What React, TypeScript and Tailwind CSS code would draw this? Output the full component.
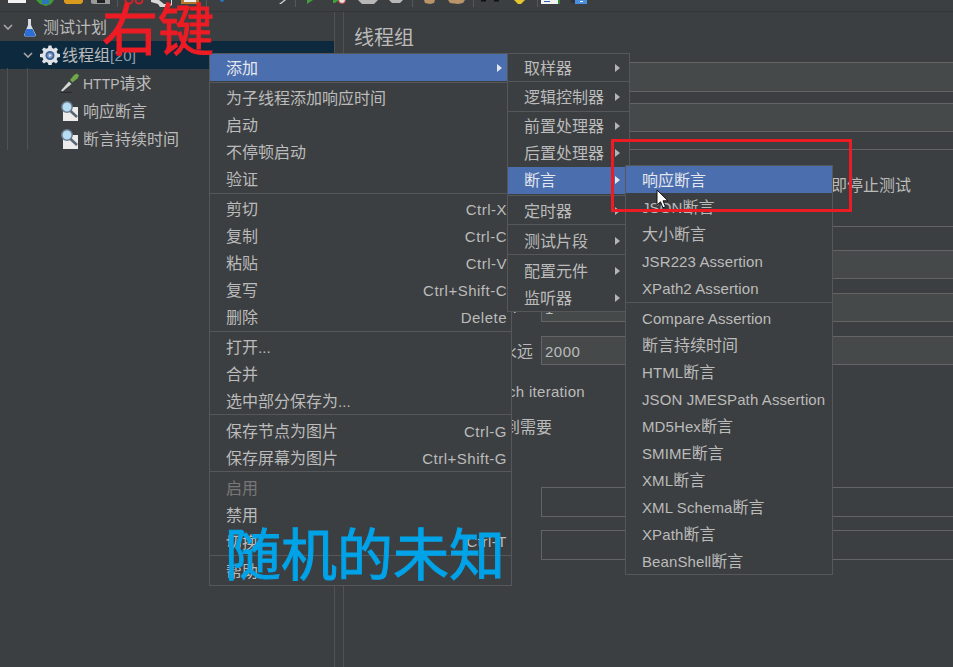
const fontStack = "font-['Liberation_Sans','Noto_Sans_CJK_SC',sans-serif]";

type MenuItem = {
    label?: string;
    shortcut?: string;
    arrow?: boolean;
    active?: boolean;
    disabled?: boolean;
    sep?: string;
};

const mainItems: MenuItem[] = [
    { label: '添加', arrow: true, active: true },
    { sep: 'mt-[1px] h-[3px]' },
    { label: '为子线程添加响应时间' },
    { label: '启动' },
    { label: '不停顿启动' },
    { label: '验证' },
    { sep: 'h-[3px]' },
    { label: '剪切', shortcut: 'Ctrl-X' },
    { label: '复制', shortcut: 'Ctrl-C' },
    { label: '粘贴', shortcut: 'Ctrl-V' },
    { label: '复写', shortcut: 'Ctrl+Shift-C' },
    { label: '删除', shortcut: 'Delete' },
    { sep: 'h-[3px]' },
    { label: '打开...' },
    { label: '合并' },
    { label: '选中部分保存为...' },
    { sep: 'h-[3px]' },
    { label: '保存节点为图片', shortcut: 'Ctrl-G' },
    { label: '保存屏幕为图片', shortcut: 'Ctrl+Shift-G' },
    { sep: 'h-[3px]' },
    { label: '启用', disabled: true },
    { label: '禁用' },
    { label: '切换', shortcut: 'Ctrl-T' },
    { sep: 'h-[3px]' },
    { label: '帮助' },
];

const addItems: MenuItem[] = [
    { label: '取样器', arrow: true },
    { sep: 'h-[3px]' },
    { label: '逻辑控制器', arrow: true },
    { sep: 'h-[2px]' },
    { label: '前置处理器', arrow: true },
    { label: '后置处理器', arrow: true },
    { label: '断言', arrow: true, active: true },
    { sep: 'mt-[1px] h-[3px]' },
    { label: '定时器', arrow: true },
    { sep: 'h-[3px]' },
    { label: '测试片段', arrow: true },
    { sep: 'h-[3px]' },
    { label: '配置元件', arrow: true },
    { label: '监听器', arrow: true },
];

const assertionItems: MenuItem[] = [
    { label: '响应断言', active: true },
    { label: 'JSON断言' },
    { label: '大小断言' },
    { label: 'JSR223 Assertion' },
    { label: 'XPath2 Assertion' },
    { sep: 'mt-[1px] h-[2px]' },
    { label: 'Compare Assertion' },
    { label: '断言持续时间' },
    { label: 'HTML断言' },
    { label: 'JSON JMESPath Assertion' },
    { label: 'MD5Hex断言' },
    { label: 'SMIME断言' },
    { label: 'XML断言' },
    { label: 'XML Schema断言' },
    { label: 'XPath断言' },
    { label: 'BeanShell断言' },
];

// latin runs are a bit smaller than the CJK ones in the Swing font
const Mixed = ({ text }: { text: string }) => (
    <>
        {text.split(/([\u4e00-\u9fff]+)/).filter(Boolean).map((part, i) =>
            /[\u4e00-\u9fff]/.test(part) ? (
                <span key={i}>{part}</span>
            ) : (
                <span key={i} className="text-[15px] tracking-[0.1px]">{part}</span>
            )
        )}
    </>
);

const MenuRows = ({ items }: { items: MenuItem[] }) => (
    <>
        {items.map((item, i) => {
            if (item.sep) return <div key={i} className={`${item.sep} border-t border-[#555759]`} />;
            return (
                <div
                    key={i}
                    className={`flex h-[27px] shrink-0 items-center justify-between whitespace-nowrap pl-[16px] ${item.active ? 'bg-[#4b6eaf] text-[#e4e7ee]' : ''} ${item.disabled ? 'text-[#777777]' : ''}`}
                >
                    <span className="pt-[2px]"><Mixed text={item.label ?? ''} /></span>
                    {item.shortcut && <span className="pr-[4px] pt-[2px] text-[15px] tracking-[0.5px]">{item.shortcut}</span>}
                    {item.arrow && (
                        <span className={`mr-[9px] h-0 w-0 border-y-[4px] border-l-[5px] border-y-transparent ${item.active ? 'border-l-[#e4e7ee]' : 'border-l-[#b4b4b4]'}`} />
                    )}
                </div>
            );
        })}
    </>
);

const ToolbarIcons = () => (
    <svg width="600" height="11" viewBox="0 0 600 11" className="absolute left-0 top-0">
        <rect x="8" y="0" width="18" height="3" fill="#f2f2f2" />
        <path d="M36 0h18l-3 4-5 2-6-2z" fill="#3f9a3a" />
        <rect x="42" y="0" width="7" height="4" fill="#2f74c0" />
        <path d="M64 0h19v2l-2 2H66l-2-2z" fill="#d99a1e" />
        <path d="M91 0h19v4H93l-2-1z" fill="#9a9a9a" />
        <rect x="97" y="0" width="8" height="3" fill="#222" />
        <rect x="117" y="0" width="1" height="7" fill="#55585a" />
        <circle cx="129" cy="0" r="3.5" fill="none" stroke="#d3232a" strokeWidth="2" />
        <circle cx="139" cy="0" r="3.5" fill="none" stroke="#d3232a" strokeWidth="2" />
        <path d="M151 0h8l5 4h7V0h1v5l-4 2h-8l-2-3-7-2z" fill="#d8d8d8" />
        <rect x="181" y="0" width="18" height="4" fill="#b4782a" />
        <rect x="184" y="0" width="12" height="2" fill="#eeeeee" />
        <rect x="206" y="0" width="1" height="7" fill="#55585a" />
        <circle cx="222" cy="0" r="2" fill="#2f74c0" />
        <path d="M279 4l5-4h2l-5 4z" fill="#d8d8d8" />
        <rect x="295" y="0" width="1" height="7" fill="#55585a" />
        <path d="M307 0h6l-6 4z" fill="#3fa03a" />
        <path d="M333 0h6l-4 3h-2z" fill="#3fa03a" />
        <circle cx="342" cy="0" r="3.5" fill="#e2e2e2" stroke="#c9342f" />
        <path d="M358 0h20l-4 4h-12z" fill="#b8b8b8" />
        <path d="M389 0h14l-3 3h-8z" fill="#b8b8b8" />
        <rect x="412" y="0" width="1" height="7" fill="#55585a" />
        <path d="M424 0h11l-1 3-4 1-5-1z" fill="#b89468" />
        <path d="M448 0h17l-2 3-5 1-8-1z" fill="#b89468" />
        <rect x="473" y="0" width="1" height="7" fill="#55585a" />
        <rect x="481" y="0" width="5" height="1.5" fill="#111" />
        <rect x="494" y="0" width="5" height="1.5" fill="#111" />
        <path d="M514 0h11l-4 4h-3z" fill="#e3c52c" />
        <rect x="537" y="0" width="1" height="7" fill="#55585a" />
        <rect x="541" y="0" width="18" height="4" fill="#f2f2f2" />
        <rect x="544" y="1" width="6" height="1" fill="#2f5fa8" />
        <rect x="558" y="0" width="2" height="4" fill="#2f8a3a" />
        <rect x="571" y="0" width="4" height="3" fill="#333" />
        <rect x="575" y="0" width="12" height="4" fill="#4a90e2" />
        <rect x="580" y="1" width="3" height="1" fill="#fff" />
    </svg>
);

const Chevron = () => (
    <svg width="10" height="6" viewBox="0 0 10 6" className="shrink-0">
        <path d="M1 1l4 4 4-4" fill="none" stroke="#a8a8a8" strokeWidth="1.6" />
    </svg>
);

const FlaskIcon = () => (
    <svg width="14" height="19" viewBox="0 0 14 19" className="shrink-0">
        <path d="M5 1h3v6l5 10-1 1.500H2L1 17 5 7z" fill="#d6dde4" />
        <path d="M3.500 11h6l3 6-1 1.500H2L1.500 16z" fill="#2b6fd6" />
    </svg>
);

const GearIcon = () => (
    <svg width="20" height="20" viewBox="0 0 20 20" className="shrink-0">
        <path
            d="M8.500 0.500h3l.5 2.500 1.800.8L16 2.400 18 4.500l-1.400 2.200.8 1.800 2.600.5v3l-2.600.5-.8 1.800 1.400 2.200-2 2-2.200-1.400-1.800.8-.5 2.600h-3l-.5-2.600-1.800-.8L4 18.500l-2-2 1.400-2.200-.8-1.800L0 12v-3l2.600-.5.800-1.800L2 4.500l2-2.100 2.200 1.400L8 3z"
            fill="#dfe2e6"
        />
        <circle cx="10" cy="10.500" r="4.500" fill="#3a5f96" />
        <circle cx="10" cy="10.500" r="2.800" fill="#7f9cc4" />
        <path d="M9 9l2.500 1.500L9 12z" fill="#e6edf6" />
    </svg>
);

const DropperIcon = () => (
    <svg width="20" height="20" viewBox="0 0 20 20" className="shrink-0">
        <path d="M1 17.500l8-9 2.500 2.500-9 7.500z" fill="#d4d8d4" />
        <path d="M10 7l4-5 3-1.500 2 2-1.500 3-5 4z" fill="#6fa64a" />
        <path d="M1 19.500h11" stroke="#2a2a2a" strokeWidth="1.200" />
    </svg>
);

const MagnifierIcon = () => (
    <svg width="20" height="20" viewBox="0 0 20 20" className="shrink-0">
        <rect x="3" y="6" width="15" height="14" fill="#ececec" />
        <circle cx="7" cy="6" r="5.200" fill="#b5dcf2" stroke="#6a7d90" strokeWidth="1.500" />
        <path d="M10.500 10l6.500 6" stroke="#5a6672" strokeWidth="2.500" />
    </svg>
);

const TreeRow = ({ indent, chevron, icon, children, selected }: { indent: string; chevron?: boolean; icon: React.ReactNode; children: React.ReactNode; selected?: boolean }) => (
    <div className={`flex h-[28px] items-center ${indent} ${selected ? 'bg-[#0d293e]' : ''}`}>
        {chevron && <Chevron />}
        {icon}
        <span className="pt-[2px]">{children}</span>
    </div>
);

const Field = ({ className, children }: { className: string; children?: React.ReactNode }) => (
    <div className={`-mr-[2px] flex items-center border border-[#646464] pl-[3px] pt-[3px] text-[15px] tracking-[0.5px] ${className}`}>{children}</div>
);

export default function App() {
    return (
        <div className={`relative flex h-[667px] w-[953px] flex-col overflow-hidden bg-[#3c3f41] text-[16px] text-[#bbbbbb] ${fontStack}`}>
            <header className="relative h-[12px] shrink-0 border-b border-[#333537]">
                <ToolbarIcons />
            </header>

            <div className="flex min-h-0 flex-1">
                <aside className="relative w-[335px] shrink-0 border-r border-[#515151] pt-[1px]">
                    <div className="absolute left-[7px] top-[56px] h-[82px] w-px bg-[#515151]" />
                    <div className="absolute left-[27px] top-[56px] h-[82px] w-px bg-[#515151]" />
                    <TreeRow indent="pl-[3px]" chevron icon={<span className="ml-[10px] mr-[6px] flex"><FlaskIcon /></span>}>
                        测试计划
                    </TreeRow>
                    <TreeRow indent="pl-[23px]" chevron selected icon={<span className="ml-[7px] mr-[2px] flex"><GearIcon /></span>}>
                        线程组<span className="text-[15px] tracking-[0.3px] text-[#8c9cab]">[20]</span>
                    </TreeRow>
                    <TreeRow indent="pl-[60px]" icon={<span className="mr-[3px] flex"><DropperIcon /></span>}>
                        <span className="text-[14px]">HTTP</span>请求
                    </TreeRow>
                    <TreeRow indent="pl-[60px]" icon={<span className="mr-[3px] flex"><MagnifierIcon /></span>}>
                        响应断言
                    </TreeRow>
                    <TreeRow indent="pl-[60px]" icon={<span className="mr-[3px] flex"><MagnifierIcon /></span>}>
                        断言持续时间
                    </TreeRow>
                </aside>

                <div className="w-[9px] shrink-0 border-r border-[#515151]" />

                <section className="flex min-w-0 flex-1 flex-col overflow-hidden">
                    <div className="pl-[10px] pt-[12px]">
                        <h1 className="text-[20px] leading-[28px] font-normal">线程组</h1>
                    </div>
                    <div className="mt-[10px] flex pl-[56px]">
                        <Field className="h-[30px] flex-1 border-x-0 bg-[#45494a]" />
                    </div>
                    <div className="mt-[11px] flex pl-[56px]">
                        <Field className="h-[29px] flex-1 border-x-0 bg-[#45494a]" />
                    </div>
                    <div className="mt-[17px] border-t border-[#646464]" />
                    <div className="mt-[24px] pl-[471px] leading-[24px] whitespace-nowrap">立即停止测试</div>
                    <div className="mt-[28px] border-t border-[#646464]" />
                    <div className="mt-[23px] flex pl-[197px]">
                        <Field className="h-[29px] flex-1 bg-[#45494a]" />
                    </div>
                    <div className="mt-[14px] flex items-center">
                        <span className="w-[197px] pr-[24px] text-right whitespace-nowrap">循环次数:</span>
                        <Field className="h-[29px] flex-1 bg-[#45494a]">1</Field>
                    </div>
                    <div className="mt-[14px] flex items-center">
                        <span className="w-[197px] pr-[8px] pt-[3px] text-right whitespace-nowrap">永远</span>
                        <Field className="h-[29px] flex-1 bg-[#45494a]">2000</Field>
                    </div>
                    <div className="mt-[15px] w-[241px] text-right text-[15px] leading-[24px] tracking-[0.3px] whitespace-nowrap">Same user on each iteration</div>
                    <div className="mt-[12px] w-[208px] text-right leading-[24px] whitespace-nowrap">延迟创建线程直到需要</div>
                    <div className="mt-[47px] flex pl-[197px]">
                        <Field className="h-[30px] flex-1" />
                    </div>
                    <div className="mt-[13px] flex pl-[197px]">
                        <Field className="h-[30px] flex-1" />
                    </div>
                </section>
            </div>

            {/* popup menus, later ones sit on top */}
            <div className="absolute left-[209px] top-[53px] flex h-[533px] w-[303px] flex-col overflow-hidden border border-[#555759] bg-[#3c3f41]">
                <MenuRows items={mainItems} />
            </div>
            <div className="absolute left-[507px] top-[53px] flex h-[259px] w-[123px] flex-col overflow-hidden border border-[#555759] bg-[#3c3f41]">
                <MenuRows items={addItems} />
            </div>
            <div className="absolute left-[625px] top-[165px] flex h-[410px] w-[208px] flex-col overflow-hidden border border-[#555759] bg-[#3c3f41]">
                <MenuRows items={assertionItems} />
            </div>

            {/* mouse pointer */}
            <svg width="14" height="21" viewBox="0 0 14 21" className="absolute left-[656px] top-[189px]">
                <path d="M1 1v15l3.500-3.200 2.500 6 2.500-1-2.500-6H12z" fill="#ffffff" stroke="#111111" strokeWidth="1" />
            </svg>

            {/* annotations on top of the screenshot */}
            <div className="absolute left-[611px] top-[139px] h-[73px] w-[241px] border-[3px] border-[#ed1c24]" />
            <div className="absolute left-[102px] top-[-9px] text-[56px] leading-[80px] text-[#ed1c24] [-webkit-text-stroke:1px_#ed1c24]">右键</div>
            <div className="absolute left-[225px] top-[515px] text-[56px] leading-[82px] text-[#00a2e8] [-webkit-text-stroke:1px_#00a2e8]">随机的未知</div>
        </div>
    );
}
